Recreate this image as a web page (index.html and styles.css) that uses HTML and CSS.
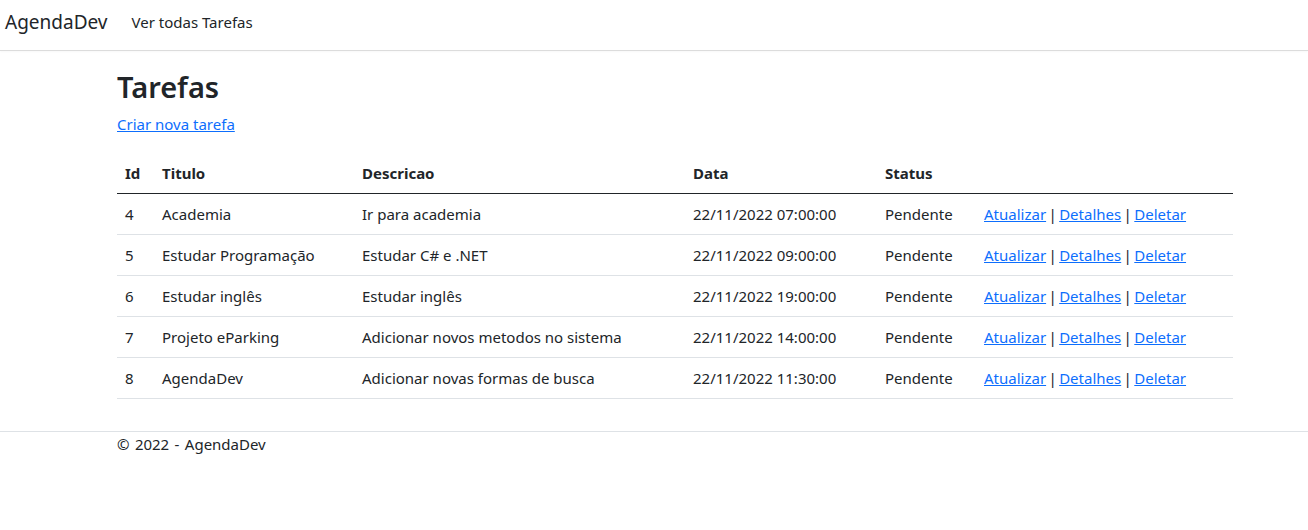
FILE: index.html
```html
<!DOCTYPE html>
<html lang="pt-br">
<head>
<meta charset="utf-8">
<title>Tarefas - AgendaDev</title>
<link rel="stylesheet" href="styles.css">
</head>
<body>
<header class="navbar">
  <a class="brand" href="#">AgendaDev</a>
  <a class="nav-link" href="#">Ver todas Tarefas</a>
</header>
<main class="container">
  <h1>Tarefas</h1>
  <p class="create"><a href="#">Criar nova tarefa</a></p>
  <table class="table">
    <thead>
      <tr><th class="c-id">Id</th><th class="c-tit">Titulo</th><th class="c-desc">Descricao</th><th class="c-data">Data</th><th class="c-st">Status</th><th></th></tr>
    </thead>
    <tbody>
      <tr><td>4</td><td>Academia</td><td>Ir para academia</td><td>22/11/2022 07:00:00</td><td>Pendente</td><td class="actions"><a href="#">Atualizar</a> | <a href="#">Detalhes</a> | <a href="#">Deletar</a></td></tr>
      <tr><td>5</td><td>Estudar Programação</td><td>Estudar C# e .NET</td><td>22/11/2022 09:00:00</td><td>Pendente</td><td class="actions"><a href="#">Atualizar</a> | <a href="#">Detalhes</a> | <a href="#">Deletar</a></td></tr>
      <tr><td>6</td><td>Estudar inglês</td><td>Estudar inglês</td><td>22/11/2022 19:00:00</td><td>Pendente</td><td class="actions"><a href="#">Atualizar</a> | <a href="#">Detalhes</a> | <a href="#">Deletar</a></td></tr>
      <tr><td>7</td><td>Projeto eParking</td><td>Adicionar novos metodos no sistema</td><td>22/11/2022 14:00:00</td><td>Pendente</td><td class="actions"><a href="#">Atualizar</a> | <a href="#">Detalhes</a> | <a href="#">Deletar</a></td></tr>
      <tr><td>8</td><td>AgendaDev</td><td>Adicionar novas formas de busca</td><td>22/11/2022 11:30:00</td><td>Pendente</td><td class="actions"><a href="#">Atualizar</a> | <a href="#">Detalhes</a> | <a href="#">Deletar</a></td></tr>
    </tbody>
  </table>
</main>
<footer class="footer">
  <div class="container">&copy; 2022 - AgendaDev</div>
</footer>
</body>
</html>
```
FILE: styles.css
```css
* { box-sizing: border-box; }
html, body { margin: 0; padding: 0; }
body {
  font-family: "Noto Sans", "Open Sans", sans-serif;
  font-size: 15px;
  line-height: 1.5;
  color: #212529;
  background: #fff;
}
a { color: #0d6efd; }
.navbar {
  display: flex;
  align-items: center;
  height: 51px;
  padding: 0 0 6px 5px;
  border-bottom: 1px solid #dcdcdc;
  box-shadow: 0 1px 2px rgba(0,0,0,0.03);
}
.brand {
  font-size: 19px;
  color: #212529;
  text-decoration: none;
  margin-right: 24px;
}
.nav-link {
  font-size: 15px;
  color: #212529;
  text-decoration: none;
}
.container {
  width: 1116px;
  margin-left: 117px;
}
h1 {
  font-size: 29px;
  font-weight: 600;
  line-height: 1.2;
  margin: 19px 0 8px;
}
.create { margin: 0 0 18px; }
.table {
  width: 100%;
  border-collapse: collapse;
  margin-bottom: 16px;
}
.table th, .table td {
  text-align: left;
  padding: 8px;
  vertical-align: top;
  border-bottom: 1px solid #dee2e6;
  line-height: 24px;
}
.table th { font-weight: 700; }
.table thead tr th { border-bottom: 1px solid #212529; }
.actions { word-spacing: -1.5px; }
.c-id { width: 37px; }
.c-tit { width: 200px; }
.c-desc { width: 331px; }
.c-data { width: 192px; }
.c-st { width: 99px; }
.footer {
  margin-top: 32px;
  border-top: 1px solid #dee2e6;
  padding-top: 1px;
}
.footer .container { word-spacing: 1.5px; }
```
